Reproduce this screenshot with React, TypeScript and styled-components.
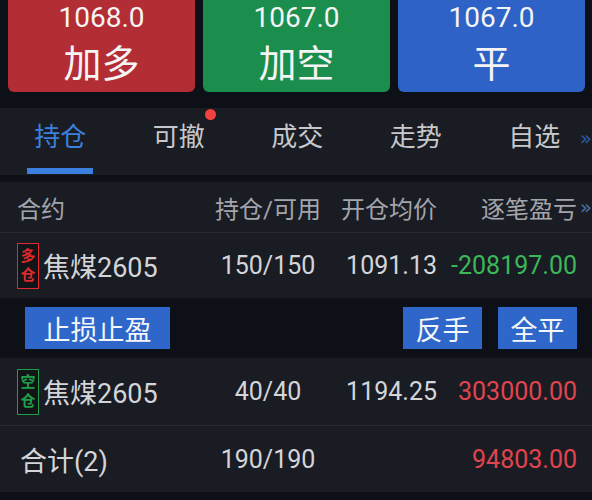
import React from "react";
import styled, { createGlobalStyle } from "styled-components";

const GlobalStyle = createGlobalStyle`
  html, body {
    margin: 0;
    padding: 0;
    background: #0d1016;
  }
  body {
    font-family: Roboto, "Noto Sans CJK SC", sans-serif;
    -webkit-font-smoothing: antialiased;
  }
`;

const Page = styled.div`
  width: 592px;
  height: 500px;
  overflow: hidden;
  background: #0d1016;
`;

const TradeBar = styled.div`
  display: grid;
  grid-template-columns: repeat(3, 1fr);
  gap: 8px;
  padding: 0 7px 0 8px;
  height: 92px;
`;

const TradeButton = styled.div<{ $bg: string }>`
  background: ${(p) => p.$bg};
  border-radius: 0 0 6px 6px;
  display: flex;
  flex-direction: column;
  align-items: center;
  color: #f4f4f4;
`;

const Price = styled.div`
  font-size: 28px;
  line-height: 34px;
  margin-top: 1px;
`;

const Action = styled.div`
  font-size: 38px;
  line-height: 46px;
  margin-top: 6px;
`;

const TabBar = styled.div`
  position: relative;
  margin-top: 16px;
  height: 67px;
  background: #1a1c23;
  display: grid;
  grid-template-columns: repeat(5, 118.5px);
  padding-left: 1px;
`;

const Tab = styled.div<{ $active?: boolean }>`
  position: relative;
  display: flex;
  justify-content: center;
  padding-top: 13px;
  font-size: 26px;
  line-height: 32px;
  color: ${(p) => (p.$active ? "#3b80dc" : "#c6c8cc")};
`;

const TabLabel = styled.span`
  position: relative;
`;

const Dot = styled.span`
  position: absolute;
  top: -12px;
  right: -11px;
  width: 11px;
  height: 11px;
  border-radius: 50%;
  background: #f0433d;
`;

const Underline = styled.div`
  position: absolute;
  bottom: 1px;
  left: 50%;
  transform: translateX(-50%);
  width: 66px;
  height: 6px;
  background: #3a7fde;
`;

const More = styled.span<{ $top: number; $color: string }>`
  position: absolute;
  right: 0;
  top: ${(p) => p.$top}px;
  font-size: 20px;
  color: ${(p) => p.$color};
  font-family: "DejaVu Sans", sans-serif;
`;

const Table = styled.div`
  margin-top: 7px;
`;

const Row = styled.div<{ $h: number; $border?: boolean }>`
  position: relative;
  display: grid;
  grid-template-columns: 183px 136px 101px 140px;
  align-items: center;
  height: ${(p) => p.$h}px;
  padding: 0 15px 0 17px;
  background: #1a1c23;
  border-bottom: ${(p) => (p.$border ? "1px solid #262932" : "none")};
  white-space: nowrap;
`;

const HeadCell = styled.div<{ $align: string }>`
  font-size: 24px;
  color: #a2a5ab;
  text-align: ${(p) => p.$align};
`;

const Cell = styled.div<{ $align: string; $color?: string }>`
  font-size: 25px;
  color: ${(p) => p.$color || "#d3d5d9"};
  text-align: ${(p) => p.$align};
`;

const NameCell = styled.div`
  display: flex;
  align-items: center;
  gap: 4px;
  font-size: 27px;
  color: #d3d5d9;
`;

const TotalCell = styled.div`
  font-size: 27px;
  color: #d3d5d9;
  padding-left: 3px;
`;

const Badge = styled.div<{ $color: string }>`
  width: 20px;
  height: 44px;
  border: 1.5px solid ${(p) => p.$color};
  color: ${(p) => p.$color};
  background: #121418;
  font-size: 15px;
  font-weight: bold;
  line-height: 19px;
  display: flex;
  flex-direction: column;
  align-items: center;
  justify-content: center;
`;

const ActionRow = styled.div`
  height: 60px;
  display: flex;
  align-items: center;
  gap: 16px;
  padding: 0 15px 0 25px;
  background: #0d1016;
`;

const Spacer = styled.div`
  flex: 1;
`;

const BlueButton = styled.div<{ $w: number }>`
  width: ${(p) => p.$w}px;
  height: 42px;
  background: #2e67c9;
  color: #f4f6fa;
  font-size: 27px;
  display: flex;
  align-items: center;
  justify-content: center;
`;

const tabs = ["持仓", "可撤", "成交", "走势", "自选"];

function App() {
  return (
    <Page>
      <GlobalStyle />
      <TradeBar>
        <TradeButton $bg="#b32d35">
          <Price>1068.0</Price>
          <Action>加多</Action>
        </TradeButton>
        <TradeButton $bg="#1b8e4e">
          <Price>1067.0</Price>
          <Action>加空</Action>
        </TradeButton>
        <TradeButton $bg="#2f62c6">
          <Price>1067.0</Price>
          <Action>平</Action>
        </TradeButton>
      </TradeBar>

      <TabBar>
        {tabs.map((t, i) => (
          <Tab key={t} $active={i === 0}>
            <TabLabel>
              {t}
              {i === 1 && <Dot />}
            </TabLabel>
            {i === 0 && <Underline />}
          </Tab>
        ))}
        <More $top={18} $color="#2c58a0">»</More>
      </TabBar>

      <Table>
        <Row $h={50} $border>
          <HeadCell $align="left">合约</HeadCell>
          <HeadCell $align="center">持仓/可用</HeadCell>
          <HeadCell $align="right">开仓均价</HeadCell>
          <HeadCell $align="right">逐笔盈亏</HeadCell>
          <More $top={13} $color="#4a6ea8">»</More>
        </Row>
        <Row $h={65}>
          <NameCell>
            <Badge $color="#dc2a2e">
              <span>多</span>
              <span>仓</span>
            </Badge>
            焦煤2605
          </NameCell>
          <Cell $align="center">150/150</Cell>
          <Cell $align="right">1091.13</Cell>
          <Cell $align="right" $color="#3bb75a">
            -208197.00
          </Cell>
        </Row>
        <ActionRow>
          <BlueButton $w={145}>止损止盈</BlueButton>
          <Spacer />
          <BlueButton $w={79}>反手</BlueButton>
          <BlueButton $w={79}>全平</BlueButton>
        </ActionRow>
        <Row $h={67} $border>
          <NameCell>
            <Badge $color="#1f9e4a">
              <span>空</span>
              <span>仓</span>
            </Badge>
            焦煤2605
          </NameCell>
          <Cell $align="center">40/40</Cell>
          <Cell $align="right">1194.25</Cell>
          <Cell $align="right" $color="#e0444e">
            303000.00
          </Cell>
        </Row>
        <Row $h={66}>
          <TotalCell>合计(2)</TotalCell>
          <Cell $align="center">190/190</Cell>
          <Cell $align="right"></Cell>
          <Cell $align="right" $color="#e0444e">
            94803.00
          </Cell>
        </Row>
      </Table>
    </Page>
  );
}

export default App;
